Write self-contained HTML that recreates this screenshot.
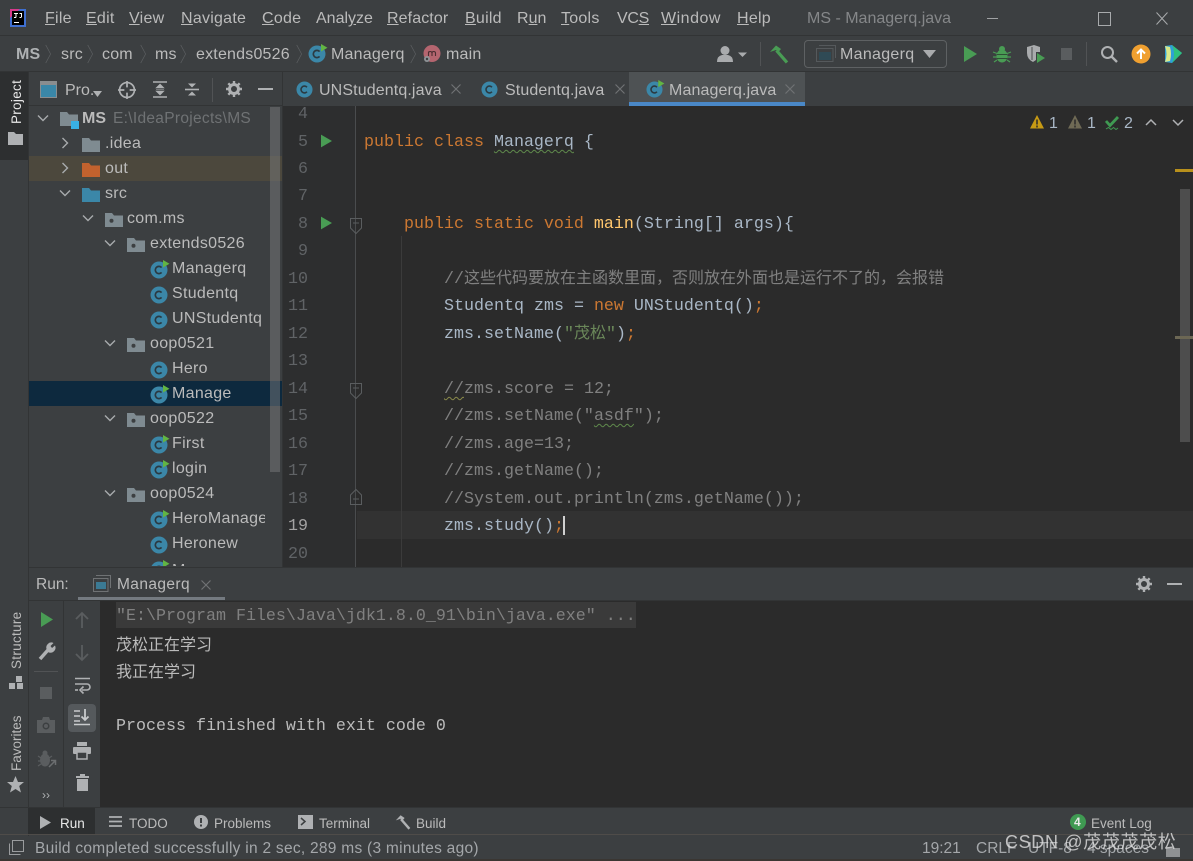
<!DOCTYPE html>
<html lang="zh"><head><meta charset="utf-8"><title>MS - Managerq.java</title>
<style>
html,body{margin:0;padding:0;background:#3c3f41}
#a{position:relative;width:1193px;height:861px;overflow:hidden;background:#3c3f41;font-family:"Liberation Sans","Noto Sans CJK SC",sans-serif;color:#bbbbbb}
#a div,#a span.t,#a svg.i{position:absolute}
svg.i,symbol{overflow:visible}
.t{white-space:nowrap;line-height:20px;height:20px}
.m{font-size:16px;letter-spacing:.25px;top:9px}
.b{font-size:16px;top:45px;letter-spacing:.2px}
.tab{font-size:16px;top:81px;letter-spacing:.12px}
.r{font-size:16px;letter-spacing:.3px}
.c{font-family:"Liberation Mono",monospace;font-size:16.67px;color:#a9b7c6;left:364px;white-space:pre}
.h{font-family:"WenQuanYi Zen Hei","Noto Sans CJK SC",sans-serif;font-size:16px;line-height:0}
.n{font-family:"Liberation Mono",monospace;font-size:16.67px;color:#606366;left:288px;width:20px;text-align:right}
.k{color:#cc7832}.f{color:#ffc66d}.g{color:#808080}.s{color:#6a8759}
.w{text-decoration:underline wavy #5f8a4c 1px;text-underline-offset:3px}
.o{font-family:"Liberation Mono",monospace;font-size:16.67px;left:116px;color:#bbbbbb;white-space:pre}
.cj{font-family:"WenQuanYi Zen Hei","Noto Sans CJK SC",sans-serif;font-size:16px;left:116px;color:#bbbbbb;white-space:pre}
.d{font-size:13.5px;top:814px;color:#bbbbbb}
.st{font-size:15.5px;top:839px;color:#a4a7aa}
.v{transform:rotate(-90deg);transform-origin:left top;font-size:13.5px;letter-spacing:.3px}
</style></head><body><div id="a">
<svg width="0" height="0" style="position:absolute"><defs>
<symbol id="cl" viewBox="0 0 18 18"><circle cx="9" cy="9" r="8.5" fill="#3b87a8"/><path d="M11.6 6.6A3.6 3.6 0 1 0 11.6 11.4" fill="none" stroke="#2b3a42" stroke-width="1.7"/></symbol>
<symbol id="cr" viewBox="0 0 18 18"><circle cx="9" cy="9" r="8.5" fill="#3b87a8"/><path d="M11.6 6.6A3.6 3.6 0 1 0 11.6 11.4" fill="none" stroke="#2b3a42" stroke-width="1.7"/><path d="M13-1V6.500L19.500 2.700Z" fill="#62b543"/></symbol>
<symbol id="fo" viewBox="0 0 18 14"><path d="M0 0H7L9 2.500H18V14H0Z" fill="#7f8b91"/></symbol>
<symbol id="pk" viewBox="0 0 18 14"><path d="M0 0H7L9 2.500H18V14H0Z" fill="#7f8b91"/><circle cx="6.500" cy="7.800" r="2" fill="#3c3f41"/></symbol>
<symbol id="dn" viewBox="0 0 12 12"><path d="M1 3.500L6 8.500L11 3.500" fill="none" stroke="#a8abad" stroke-width="1.400"/></symbol>
<symbol id="rt" viewBox="0 0 12 12"><path d="M3.500 1L8.500 6L3.500 11" fill="none" stroke="#a8abad" stroke-width="1.400"/></symbol>
<symbol id="sp" viewBox="0 0 10 28"><path d="M1 1L8 14L1 27" fill="none" stroke="#5c5f61" stroke-width="1"/></symbol>
<symbol id="x" viewBox="0 0 12 12"><path d="M1.500 1.500L10.500 10.500M10.500 1.500L1.500 10.500" stroke="#6f7274" stroke-width="1.200"/></symbol>
<symbol id="pl" viewBox="0 0 12 14"><path d="M0 0L12 7L0 14Z" fill="#499c54"/></symbol>
<symbol id="fd" viewBox="0 0 12 16"><path d="M.5.500H11.500V10L6 15.500L.5 10Z M3 5H9" fill="none" stroke="#5a5d5f" stroke-width="1"/></symbol>
<symbol id="fu" viewBox="0 0 12 16"><path d="M.5 15.500H11.500V6L6 .5L.5 6Z M3 10H9" fill="none" stroke="#5a5d5f" stroke-width="1"/></symbol>
</defs></svg>

<!-- title bar -->
<div style="left:0;top:35px;width:1193px;height:1px;background:#323435"></div>
<svg class="i" style="left:10px;top:9px" width="16" height="18" viewBox="0 0 16 18"><rect width="16" height="18" fill="#3f6fd0"/><path d="M0 0H10L0 9Z" fill="#d83a8c"/><rect x="2" y="2" width="12" height="14" fill="#000"/><rect x="4" y="13" width="5" height="1" fill="#fff"/><path d="M4 4.500H8M6 4.500V8.500M4 8.500H6M9.500 4.500H11.500V8M9.500 8.500H11.500" stroke="#fff" stroke-width="1" fill="none"/></svg>
<span class="t m" style="left:45px"><u>F</u>ile</span>
<span class="t m" style="left:86px"><u>E</u>dit</span>
<span class="t m" style="left:129px"><u>V</u>iew</span>
<span class="t m" style="left:181px"><u>N</u>avigate</span>
<span class="t m" style="left:262px"><u>C</u>ode</span>
<span class="t m" style="left:316px;letter-spacing:0">Anal<u>y</u>ze</span>
<span class="t m" style="left:387px;letter-spacing:.1px"><u>R</u>efactor</span>
<span class="t m" style="left:465px"><u>B</u>uild</span>
<span class="t m" style="left:517px"><span style="letter-spacing:0">R<u>u</u>n</span></span>
<span class="t m" style="left:561px"><u>T</u>ools</span>
<span class="t m" style="left:617px;letter-spacing:-.3px">VC<u>S</u></span>
<span class="t m" style="left:661px;letter-spacing:.5px"><u>W</u>indow</span>
<span class="t m" style="left:737px"><u>H</u>elp</span>
<span class="t m" style="left:807px;color:#858789;letter-spacing:0">MS - Managerq.java</span>
<div style="left:987px;top:18px;width:11px;height:1px;background:#a0a2a4"></div>
<div style="left:1098px;top:12px;width:11px;height:12px;border:1px solid #a8aaac"></div>
<svg class="i" style="left:1156px;top:12px" width="12" height="13"><path d="M.5.500L11.500 12.500M11.500.5L.5 12.500" stroke="#a8aaac"/></svg>

<!-- breadcrumb -->
<div style="left:0;top:71px;width:1193px;height:1px;background:#323435"></div>
<span class="t b" style="left:16px;font-weight:bold;color:#aeb1b3">MS</span>
<svg class="i" style="left:45px;top:40px" width="7" height="28"><use href="#sp"/></svg>
<span class="t b" style="left:61px">src</span>
<svg class="i" style="left:87px;top:40px" width="7" height="28"><use href="#sp"/></svg>
<span class="t b" style="left:102px">com</span>
<svg class="i" style="left:140px;top:40px" width="7" height="28"><use href="#sp"/></svg>
<span class="t b" style="left:155px">ms</span>
<svg class="i" style="left:180px;top:40px" width="7" height="28"><use href="#sp"/></svg>
<span class="t b" style="left:196px">extends0526</span>
<svg class="i" style="left:296px;top:40px" width="7" height="28"><use href="#sp"/></svg>
<svg class="i" style="left:308px;top:45px" width="18" height="18"><use href="#cr"/></svg>
<span class="t b" style="left:331px">Managerq</span>
<svg class="i" style="left:410px;top:40px" width="7" height="28"><use href="#sp"/></svg>
<svg class="i" style="left:422px;top:44px" width="20" height="20" viewBox="0 0 20 20"><circle cx="10" cy="9.500" r="8.500" fill="#b4656f"/><path d="M6.500 12V7.500M6.500 9Q6.500 7.500 8.200 7.500T10 9V12M10 9Q10 7.500 11.700 7.500T13.500 9V12" stroke="#4a2d31" fill="none" stroke-width="1.100"/><circle cx="5" cy="15" r="3" fill="#8f9397"/><circle cx="5" cy="15" r="1.200" fill="#3c3f41"/></svg>
<span class="t b" style="left:446px">main</span>

<svg class="i" style="left:716px;top:45px" width="36" height="18" viewBox="0 0 36 18"><circle cx="9" cy="5.500" r="4.500" fill="#a9abad"/><path d="M1 17Q1 11 6 10H12Q17 11 17 17Z" fill="#a9abad"/><path d="M22 7.500H31L26.500 12Z" fill="#a9abad"/></svg>
<div style="left:760px;top:42px;width:1px;height:24px;background:#515355"></div>
<svg class="i" style="left:769px;top:44px" width="20" height="20" viewBox="0 0 20 20"><path d="M1 8L7 1.500L12 5L9.500 8L7 6Z" fill="#499c54"/><path d="M7.500 6.500L18 18.500" stroke="#499c54" stroke-width="3.200"/></svg>
<div style="left:804px;top:40px;width:141px;height:26px;border:1px solid #5e6163;border-radius:4px"></div>
<svg class="i" style="left:816px;top:45px" width="20" height="17" viewBox="0 0 20 17"><path d="M3 .5H19.500V13M.5 3.500H17V16.500H.5Z" fill="none" stroke="#55595c"/><rect x="3" y="7" width="12" height="8" fill="#2f4a55"/></svg>
<span class="t b" style="left:840px;letter-spacing:.3px">Managerq</span>
<svg class="i" style="left:923px;top:50px" width="13" height="8"><path d="M0 0H13L6.500 8Z" fill="#a9abad"/></svg>
<svg class="i" style="left:964px;top:46px" width="13" height="16"><path d="M0 0L13 8L0 16Z" fill="#499c54"/></svg>
<svg class="i" style="left:993px;top:45px" width="18" height="18" viewBox="0 0 18 18"><ellipse cx="9" cy="11" rx="5.500" ry="6.500" fill="#499c54"/><circle cx="9" cy="4" r="3" fill="#499c54"/><path d="M0 7L4 8.500M18 7L14 8.500M0 12H4M18 12H14M1 17L4 15M17 17L14 15" stroke="#499c54" stroke-width="1.200"/><path d="M4 9.500H14M4 13.500H14" stroke="#2f4f35" stroke-width="1"/></svg>
<svg class="i" style="left:1026px;top:45px" width="20" height="19" viewBox="0 0 20 19"><path d="M1 2L8 0L14 2V7H10V15L7 17Q1 14 1 8Z" fill="#a9abad"/><path d="M6 2V15" stroke="#4a4d4f"/><path d="M11 8L19 13L11 18Z" fill="#499c54"/></svg>
<div style="left:1061px;top:48px;width:11px;height:12px;background:#5a5d5f"></div>
<div style="left:1086px;top:42px;width:1px;height:24px;background:#515355"></div>
<svg class="i" style="left:1100px;top:45px" width="18" height="18" viewBox="0 0 18 18"><circle cx="7.500" cy="7.500" r="5.500" fill="none" stroke="#afb1b3" stroke-width="2"/><path d="M11.500 11.500L17 17" stroke="#afb1b3" stroke-width="2.400"/></svg>
<svg class="i" style="left:1131px;top:44px" width="20" height="20" viewBox="0 0 20 20"><circle cx="10" cy="10" r="9.500" fill="#f0a030"/><path d="M10 15V6M6 9.500L10 5.500L14 9.500" fill="none" stroke="#fff" stroke-width="2"/></svg>
<svg class="i" style="left:1164px;top:44px" width="19" height="20" viewBox="0 0 19 20"><path d="M1 2L8 1L18 9L8 19L1 18Z" fill="#2f9fd8"/><path d="M8 1L18 9L8 19Q12 10 8 1Z" fill="#2ec27e"/><path d="M1 2Q4 10 1 18L6 17Q8 10 6 3Z" fill="#d8e88a"/></svg>

<!-- left stripe -->
<div style="left:0;top:72px;width:28px;height:88px;background:#2d2f30"></div>
<div style="left:28px;top:72px;width:1px;height:764px;background:#323435"></div>
<span class="t v" style="left:7px;top:124px;color:#e8e8e8;width:60px">Project</span>
<svg class="i" style="left:8px;top:132px" width="15" height="13"><path d="M0 0H6L8 2H15V13H0Z" fill="#afb1b3"/></svg>
<span class="t v" style="left:7px;top:669px;width:70px">Structure</span>
<svg class="i" style="left:9px;top:676px" width="14" height="13"><path d="M7 0H13V6H7ZM0 7H6V13H0ZM8 7H14V13H8Z" fill="#afb1b3"/></svg>
<span class="t v" style="left:7px;top:771px;width:70px;letter-spacing:0">Favorites</span>
<svg class="i" style="left:7px;top:776px" width="17" height="17" viewBox="0 0 17 17"><path d="M8.500 0L11 6H17L12.200 10L14 16.500L8.500 13L3 16.500L4.800 10L0 6H6Z" fill="#afb1b3"/></svg>

<!-- project header -->
<div style="left:29px;top:105px;width:254px;height:1px;background:#323435"></div>
<svg class="i" style="left:40px;top:81px" width="17" height="17" viewBox="0 0 17 17"><rect x=".5" y=".5" width="16" height="16" fill="#3a87a8" stroke="#8a8d8f"/><rect x="1" y="1" width="15" height="3" fill="#8a8d8f"/></svg>
<span class="t tab" style="left:65px;letter-spacing:0">Pro.</span>
<svg class="i" style="left:93px;top:91px" width="9" height="6"><path d="M0 0H9L4.500 6Z" fill="#afb1b3"/></svg>
<svg class="i" style="left:118px;top:81px" width="18" height="18" viewBox="0 0 17 17"><circle cx="8.500" cy="8.500" r="7" fill="none" stroke="#afb1b3" stroke-width="1.600"/><path d="M8.500 0V6M8.500 11V17M0 8.500H6M11 8.500H17" stroke="#afb1b3" stroke-width="1.600"/></svg>
<svg class="i" style="left:152px;top:81px" width="16" height="17" viewBox="0 0 16 17"><path d="M1 1H15M1 16H15" stroke="#afb1b3" stroke-width="1.600"/><path d="M8 3L12 7H4ZM8 14L12 10H4ZM4 8.500H12" fill="#afb1b3" stroke="#afb1b3" stroke-width=".6"/></svg>
<svg class="i" style="left:184px;top:81px" width="16" height="17" viewBox="0 0 16 17"><path d="M1 8.500H15" stroke="#afb1b3" stroke-width="1.600"/><path d="M8 6.500L12 2.500H4ZM8 10.500L12 14.500H4Z" fill="#afb1b3"/></svg>
<div style="left:212px;top:78px;width:1px;height:24px;background:#515355"></div>
<svg class="i" style="left:226px;top:81px" width="16" height="16" viewBox="0 0 16 16"><circle cx="8" cy="8" r="4.500" fill="none" stroke="#afb1b3" stroke-width="3"/><path d="M8 0V3M8 13V16M0 8H3M13 8H16M2.300 2.300L4.400 4.400M11.600 11.600L13.700 13.700M13.700 2.300L11.600 4.400M4.400 11.600L2.300 13.700" stroke="#afb1b3" stroke-width="2.400"/></svg>
<div style="left:258px;top:88px;width:15px;height:2px;background:#afb1b3"></div>

<!-- tabs -->
<div style="left:282px;top:72px;width:1px;height:495px;background:#323435"></div>
<svg class="i" style="left:296px;top:81px" width="17" height="17"><use href="#cl"/></svg>
<span class="t tab" style="left:319px">UNStudentq.java</span>
<svg class="i" style="left:450px;top:83px" width="12" height="12"><use href="#x"/></svg>
<svg class="i" style="left:481px;top:81px" width="17" height="17"><use href="#cl"/></svg>
<span class="t tab" style="left:505px">Studentq.java</span>
<svg class="i" style="left:614px;top:83px" width="12" height="12"><use href="#x"/></svg>
<div style="left:629px;top:72px;width:176px;height:34px;background:#4e5254"></div>
<div style="left:629px;top:102px;width:176px;height:4px;background:#4a88c7"></div>
<svg class="i" style="left:646px;top:81px" width="17" height="17"><use href="#cr"/></svg>
<span class="t tab" style="left:669px">Managerq.java</span>
<svg class="i" style="left:784px;top:83px" width="12" height="12"><use href="#x"/></svg>

<!-- tree -->
<div style="left:29px;top:156px;width:253px;height:25px;background:#4c483d"></div>
<div style="left:29px;top:381px;width:253px;height:25px;background:#0d293e"></div>
<div style="left:270px;top:107px;width:10px;height:365px;background:rgba(120,122,124,.5)"></div>
<svg class="i" style="left:37px;top:112px" width="12" height="12"><use href="#dn"/></svg>
<svg class="i" style="left:60px;top:112px" width="20" height="19" viewBox="0 0 20 19"><path d="M0 0H7L9 2.500H18V14H0Z" fill="#7f8b91"/><rect x="11" y="9" width="8" height="8" fill="#39b0e5"/></svg>
<span class="t r" style="left:82px;top:109px;font-weight:bold;letter-spacing:0">MS</span>
<span class="t" style="left:113px;top:109px;font-size:15.500px;color:#6f7274;letter-spacing:.3px">E:\IdeaProjects\MS</span>
<svg class="i" style="left:59px;top:137px" width="12" height="12"><use href="#rt"/></svg>
<svg class="i" style="left:82px;top:138px" width="18" height="14"><use href="#fo"/></svg>
<span class="t r" style="left:105px;top:134px">.idea</span>
<svg class="i" style="left:59px;top:162px" width="12" height="12"><use href="#rt"/></svg>
<svg class="i" style="left:82px;top:163px" width="18" height="14" viewBox="0 0 18 14"><path d="M0 0H7L9 2.500H18V14H0Z" fill="#c2622e"/></svg>
<span class="t r" style="left:105px;top:159px">out</span>
<svg class="i" style="left:59px;top:187px" width="12" height="12"><use href="#dn"/></svg>
<svg class="i" style="left:82px;top:188px" width="18" height="14" viewBox="0 0 18 14"><path d="M0 0H7L9 2.500H18V14H0Z" fill="#3b87a8"/></svg>
<span class="t r" style="left:105px;top:184px">src</span>
<svg class="i" style="left:82px;top:212px" width="12" height="12"><use href="#dn"/></svg>
<svg class="i" style="left:105px;top:213px" width="18" height="14"><use href="#pk"/></svg>
<span class="t r" style="left:127px;top:209px">com.ms</span>
<svg class="i" style="left:104px;top:237px" width="12" height="12"><use href="#dn"/></svg>
<svg class="i" style="left:127px;top:238px" width="18" height="14"><use href="#pk"/></svg>
<span class="t r" style="left:150px;top:234px">extends0526</span>
<svg class="i" style="left:150px;top:261px" width="18" height="18"><use href="#cr"/></svg>
<span class="t r" style="left:172px;top:259px">Managerq</span>
<svg class="i" style="left:150px;top:286px" width="18" height="18"><use href="#cl"/></svg>
<span class="t r" style="left:172px;top:284px">Studentq</span>
<svg class="i" style="left:150px;top:311px" width="18" height="18"><use href="#cl"/></svg>
<span class="t r" style="left:172px;top:309px">UNStudentq</span>
<svg class="i" style="left:104px;top:337px" width="12" height="12"><use href="#dn"/></svg>
<svg class="i" style="left:127px;top:338px" width="18" height="14"><use href="#pk"/></svg>
<span class="t r" style="left:150px;top:334px">oop0521</span>
<svg class="i" style="left:150px;top:361px" width="18" height="18"><use href="#cl"/></svg>
<span class="t r" style="left:172px;top:359px">Hero</span>
<svg class="i" style="left:150px;top:386px" width="18" height="18"><use href="#cr"/></svg>
<span class="t r" style="left:172px;top:384px">Manage</span>
<svg class="i" style="left:104px;top:412px" width="12" height="12"><use href="#dn"/></svg>
<svg class="i" style="left:127px;top:413px" width="18" height="14"><use href="#pk"/></svg>
<span class="t r" style="left:150px;top:409px">oop0522</span>
<svg class="i" style="left:150px;top:436px" width="18" height="18"><use href="#cr"/></svg>
<span class="t r" style="left:172px;top:434px">First</span>
<svg class="i" style="left:150px;top:461px" width="18" height="18"><use href="#cr"/></svg>
<span class="t r" style="left:172px;top:459px">login</span>
<svg class="i" style="left:104px;top:487px" width="12" height="12"><use href="#dn"/></svg>
<svg class="i" style="left:127px;top:488px" width="18" height="14"><use href="#pk"/></svg>
<span class="t r" style="left:150px;top:484px">oop0524</span>
<svg class="i" style="left:150px;top:511px" width="18" height="18"><use href="#cr"/></svg>
<div style="left:172px;top:509px;width:93px;height:20px;overflow:hidden"><span class="t r" style="left:0;top:0">HeroManager</span></div>
<svg class="i" style="left:150px;top:536px" width="18" height="18"><use href="#cl"/></svg>
<span class="t r" style="left:172px;top:534px">Heronew</span>
<div style="left:150px;top:558px;width:40px;height:8px;overflow:hidden"><svg class="i" style="left:0;top:3px" width="18" height="18"><use href="#cr"/></svg><span class="t r" style="left:22px;top:3px">M</span></div>

<!-- editor -->
<div style="left:283px;top:106px;width:910px;height:461px;background:#2b2b2b"></div>
<div style="left:283px;top:106px;width:73px;height:461px;background:#2d2e2f"></div>
<div style="left:355px;top:106px;width:1px;height:461px;background:#4a4c4e"></div>
<div style="left:357px;top:511px;width:836px;height:28px;background:#323232"></div>
<div style="left:401px;top:236px;width:1px;height:331px;background:#3b3b3b"></div>
<div style="left:563px;top:516px;width:2px;height:19px;background:#d0d0d0"></div>

<span class="t n" style="top:105px">4</span>
<span class="t n" style="top:133px">5</span>
<span class="t n" style="top:160px">6</span>
<span class="t n" style="top:187px">7</span>
<span class="t n" style="top:215px">8</span>
<span class="t n" style="top:242px">9</span>
<span class="t n" style="top:270px">10</span>
<span class="t n" style="top:297px">11</span>
<span class="t n" style="top:325px">12</span>
<span class="t n" style="top:352px">13</span>
<span class="t n" style="top:380px">14</span>
<span class="t n" style="top:407px">15</span>
<span class="t n" style="top:435px">16</span>
<span class="t n" style="top:462px">17</span>
<span class="t n" style="top:490px">18</span>
<span class="t n" style="top:517px;color:#a4a3a3">19</span>
<span class="t n" style="top:545px">20</span>

<svg class="i" style="left:321px;top:134px" width="11" height="14"><use href="#pl"/></svg>
<svg class="i" style="left:321px;top:216px" width="11" height="14"><use href="#pl"/></svg>
<svg class="i" style="left:350px;top:218px" width="12" height="16"><use href="#fd"/></svg>
<svg class="i" style="left:350px;top:383px" width="12" height="16"><use href="#fd"/></svg>
<svg class="i" style="left:350px;top:489px" width="12" height="16"><use href="#fu"/></svg>

<span class="t c" style="top:133px"><span class="k">public class </span><span class="w">Managerq</span> {</span>
<span class="t c" style="top:215px;left:404px"><span class="k">public static void </span><span class="f">main</span>(String[] args){</span>
<span class="t c" style="top:270px;left:444px"><span class="g">//<span class="h">这些代码要放在主函数里面，否则放在外面也是运行不了的，会报错</span></span></span>
<span class="t c" style="top:297px;left:444px">Studentq zms = <span class="k">new</span> UNStudentq()<span class="k">;</span></span>
<span class="t c" style="top:325px;left:444px">zms.setName(<span class="s">"<span class="h">茂松</span>"</span>)<span class="k">;</span></span>
<span class="t c" style="top:380px;left:444px"><span class="g"><span style="text-decoration:underline wavy #8a8a4a 1px;text-underline-offset:3px">//</span>zms.score = 12;</span></span>
<span class="t c" style="top:407px;left:444px"><span class="g">//zms.setName("<span class="w">asdf</span>");</span></span>
<span class="t c" style="top:435px;left:444px"><span class="g">//zms.age=13;</span></span>
<span class="t c" style="top:462px;left:444px"><span class="g">//zms.getName();</span></span>
<span class="t c" style="top:490px;left:444px"><span class="g">//System.out.println(zms.getName());</span></span>
<span class="t c" style="top:517px;left:444px">zms.study()<span class="k">;</span></span>

<svg class="i" style="left:1030px;top:115px" width="14" height="14"><path d="M7 0L14 13.500H0Z" fill="#c79a14"/><path d="M7 4.500V9.500M7 10.500V12.500" stroke="#2b2b2b" stroke-width="1.500"/></svg>
<span class="t" style="left:1049px;top:114px;font-size:16px;color:#a9b7c6">1</span>
<svg class="i" style="left:1068px;top:115px" width="14" height="14"><path d="M7 0L14 13.500H0Z" fill="#6f6a55"/><path d="M7 4.500V9.500M7 10.500V12.500" stroke="#2b2b2b" stroke-width="1.500"/></svg>
<span class="t" style="left:1087px;top:114px;font-size:16px;color:#a9b7c6">1</span>
<svg class="i" style="left:1105px;top:116px" width="14" height="15"><path d="M1 5L5 9.500L13 1" fill="none" stroke="#3f9a52" stroke-width="2.800"/><path d="M1 13L3.500 11.500L6 13.500L8.500 11.500L11 13.500L13 12" fill="none" stroke="#3f9a52"/></svg>
<span class="t" style="left:1124px;top:114px;font-size:16px;color:#a9b7c6">2</span>
<svg class="i" style="left:1145px;top:119px" width="12" height="7"><path d="M1 6L6 1L11 6" fill="none" stroke="#b0b2b4" stroke-width="1.500"/></svg>
<svg class="i" style="left:1172px;top:119px" width="12" height="7"><path d="M1 1L6 6L11 1" fill="none" stroke="#b0b2b4" stroke-width="1.500"/></svg>
<div style="left:1180px;top:189px;width:10px;height:253px;background:#4d4d4d"></div>
<div style="left:1175px;top:169px;width:18px;height:3px;background:#b8901c"></div>
<div style="left:1175px;top:336px;width:18px;height:3px;background:#6c6754"></div>

<!-- run panel -->
<div style="left:29px;top:567px;width:1164px;height:1px;background:#323435"></div>
<span class="t" style="left:36px;top:575px;font-size:15.500px">Run:</span>
<svg class="i" style="left:93px;top:575px" width="18" height="17" viewBox="0 0 18 17"><path d="M3 .5H17.500V13M.5 3.500H15V16.500H.5Z" fill="none" stroke="#6f7274"/><rect x="3" y="7" width="10" height="7" fill="#3b7a94"/></svg>
<span class="t" style="left:117px;top:575px;font-size:15.500px;letter-spacing:.4px">Managerq</span>
<svg class="i" style="left:200px;top:579px" width="12" height="12"><use href="#x"/></svg>
<div style="left:78px;top:597px;width:147px;height:4px;background:#747a80"></div>
<div style="left:29px;top:600px;width:1164px;height:1px;background:#323435"></div>
<svg class="i" style="left:1136px;top:576px" width="16" height="16" viewBox="0 0 16 16"><circle cx="8" cy="8" r="4.500" fill="none" stroke="#afb1b3" stroke-width="3"/><path d="M8 0V3M8 13V16M0 8H3M13 8H16M2.300 2.300L4.400 4.400M11.600 11.600L13.700 13.700M13.700 2.300L11.600 4.400M4.400 11.600L2.300 13.700" stroke="#afb1b3" stroke-width="2.400"/></svg>
<div style="left:1167px;top:583px;width:15px;height:2px;background:#afb1b3"></div>

<div style="left:63px;top:601px;width:1px;height:206px;background:#323435"></div>
<div style="left:100px;top:601px;width:1093px;height:206px;background:#2b2b2b"></div>
<svg class="i" style="left:41px;top:612px" width="12" height="15"><path d="M0 0L12 7.500L0 15Z" fill="#499c54"/></svg>
<svg class="i" style="left:38px;top:642px" width="18" height="19" viewBox="0 0 18 19"><path d="M2 17L10 8" stroke="#afb1b3" stroke-width="3.500"/><path d="M9 8A5 5 0 0 1 15.500 1L12.500 4L14 6L17 3.500A5 5 0 0 1 10 10Z" fill="#afb1b3"/></svg>
<div style="left:34px;top:671px;width:24px;height:1px;background:#515355"></div>
<div style="left:40px;top:687px;width:12px;height:12px;background:#5a5d5f"></div>
<svg class="i" style="left:37px;top:717px" width="18" height="16" viewBox="0 0 18 16"><path d="M0 3H5L6 0H12L13 3H18V16H0Z" fill="#5a5d5f"/><circle cx="9" cy="9" r="3.500" fill="#3c3f41"/><circle cx="9" cy="9" r="2" fill="#5a5d5f"/></svg>
<svg class="i" style="left:38px;top:750px" width="18" height="18" viewBox="0 0 18 18"><ellipse cx="7" cy="10" rx="5" ry="6.500" fill="#5a5d5f"/><circle cx="7" cy="3" r="2.500" fill="#5a5d5f"/><path d="M0 6L3 8M14 6L11 8M0 11H3M0 16L3 14" stroke="#5a5d5f" stroke-width="1.200"/><path d="M11 17L17 11M13 10.500H17.500V15" fill="none" stroke="#6b6e70" stroke-width="1.500"/></svg>
<span class="t" style="left:42px;top:785px;font-size:12px;color:#afb1b3">››</span>

<svg class="i" style="left:75px;top:612px" width="14" height="16"><path d="M7 16V1M1 7L7 1L13 7" fill="none" stroke="#5a5d5f" stroke-width="1.800"/></svg>
<svg class="i" style="left:75px;top:645px" width="14" height="16"><path d="M7 0V15M1 9L7 15L13 9" fill="none" stroke="#5a5d5f" stroke-width="1.800"/></svg>
<svg class="i" style="left:74px;top:677px" width="17" height="17" viewBox="0 0 17 17"><path d="M1 1.500H16M1 7H13A3 3 0 0 1 13 13H8" fill="none" stroke="#afb1b3" stroke-width="1.600"/><path d="M9.500 9.500L6 13L9.500 16.500" fill="none" stroke="#afb1b3" stroke-width="1.600"/><path d="M1 13H4" stroke="#afb1b3" stroke-width="1.600"/></svg>
<div style="left:68px;top:704px;width:28px;height:28px;background:#55595c;border-radius:4px"></div>
<svg class="i" style="left:74px;top:709px" width="17" height="17" viewBox="0 0 17 17"><path d="M0 15.500H16M0 2H6M0 7H6M0 12H6" stroke="#c9cbcd" stroke-width="1.600"/><path d="M11 0V11M7.500 7.500L11 11L14.500 7.500" fill="none" stroke="#c9cbcd" stroke-width="1.800"/></svg>
<svg class="i" style="left:73px;top:742px" width="18" height="17" viewBox="0 0 18 17"><rect x="4" y="0" width="10" height="4" fill="#afb1b3"/><rect x="0" y="5" width="18" height="7" rx="1" fill="#afb1b3"/><rect x="4" y="10" width="10" height="7" fill="#3c3f41" stroke="#afb1b3" stroke-width="1.500"/></svg>
<svg class="i" style="left:76px;top:774px" width="13" height="17" viewBox="0 0 13 17"><path d="M0 2H13V4H0ZM4 0H9V2H4ZM1 5H12V17H1Z" fill="#afb1b3"/></svg>

<div style="left:116px;top:602px;width:520px;height:26px;background:#3a3a3a"></div>
<span class="t o" style="top:607px;color:#808080">"E:\Program Files\Java\jdk1.8.0_91\bin\java.exe" ...</span>
<span class="t cj" style="top:633px">茂松正在学习</span>
<span class="t cj" style="top:660px">我正在学习</span>
<span class="t o" style="top:717px">Process finished with exit code 0</span>

<!-- bottom tool bar -->
<div style="left:0;top:807px;width:1193px;height:1px;background:#323435"></div>
<div style="left:28px;top:808px;width:67px;height:27px;background:#2d2f30"></div>
<svg class="i" style="left:40px;top:816px" width="11" height="13"><path d="M0 0L11 6.500L0 13Z" fill="#afb1b3"/></svg>
<span class="t d" style="left:60px;color:#e8e8e8">Run</span>
<svg class="i" style="left:109px;top:816px" width="13" height="11"><path d="M0 1H13M0 5.500H13M0 10H13" stroke="#afb1b3" stroke-width="1.800"/></svg>
<span class="t d" style="left:129px">TODO</span>
<svg class="i" style="left:194px;top:815px" width="14" height="14"><circle cx="7" cy="7" r="7" fill="#afb1b3"/><path d="M7 3V8M7 9.500V11.500" stroke="#3c3f41" stroke-width="2"/></svg>
<span class="t d" style="left:214px">Problems</span>
<svg class="i" style="left:298px;top:815px" width="15" height="14"><rect width="15" height="14" fill="#afb1b3"/><path d="M3 3L7 6.500L3 10" fill="none" stroke="#3c3f41" stroke-width="1.500"/></svg>
<span class="t d" style="left:319px">Terminal</span>
<svg class="i" style="left:395px;top:814px" width="16" height="16" viewBox="0 0 20 20"><path d="M1 8L7 1.500L12 5L9.500 8L7 6Z" fill="#afb1b3"/><path d="M7.500 6.500L18 18.500" stroke="#afb1b3" stroke-width="3"/></svg>
<span class="t d" style="left:416px">Build</span>
<svg class="i" style="left:1070px;top:814px" width="16" height="16"><circle cx="8" cy="8" r="8" fill="#3f9a52"/></svg>
<span class="t" style="left:1074px;top:812px;font-size:12px;font-weight:bold;color:#e8e8e8">4</span>
<span class="t d" style="left:1091px">Event Log</span>

<!-- status bar -->
<div style="left:0;top:834px;width:1193px;height:1px;background:#4f4c49"></div>
<svg class="i" style="left:9px;top:840px" width="15" height="15" viewBox="0 0 15 15"><path d="M3.500.5H14.500V11.500H3.500ZM.5 3.500V14.500H11.500" fill="none" stroke="#9a9c9e"/></svg>
<span class="t st" style="left:35px;letter-spacing:.27px">Build completed successfully in 2 sec, 289 ms (3 minutes ago)</span>
<span class="t st" style="left:922px">19:21</span>
<span class="t st" style="left:976px">CRLF</span>
<span class="t st" style="left:1028px">UTF-8</span>
<span class="t st" style="left:1087px">4 spaces</span>
<div style="left:1166px;top:848px;width:14px;height:9px;background:#8f9193"></div>
<div style="left:0;top:859px;width:1193px;height:2px;background:#3a3632"></div>
<span class="t" style="left:1005px;top:832px;font-size:18px;color:rgba(225,225,225,.8);letter-spacing:.65px">CSDN @茂茂茂茂松</span>
</div></body></html>
